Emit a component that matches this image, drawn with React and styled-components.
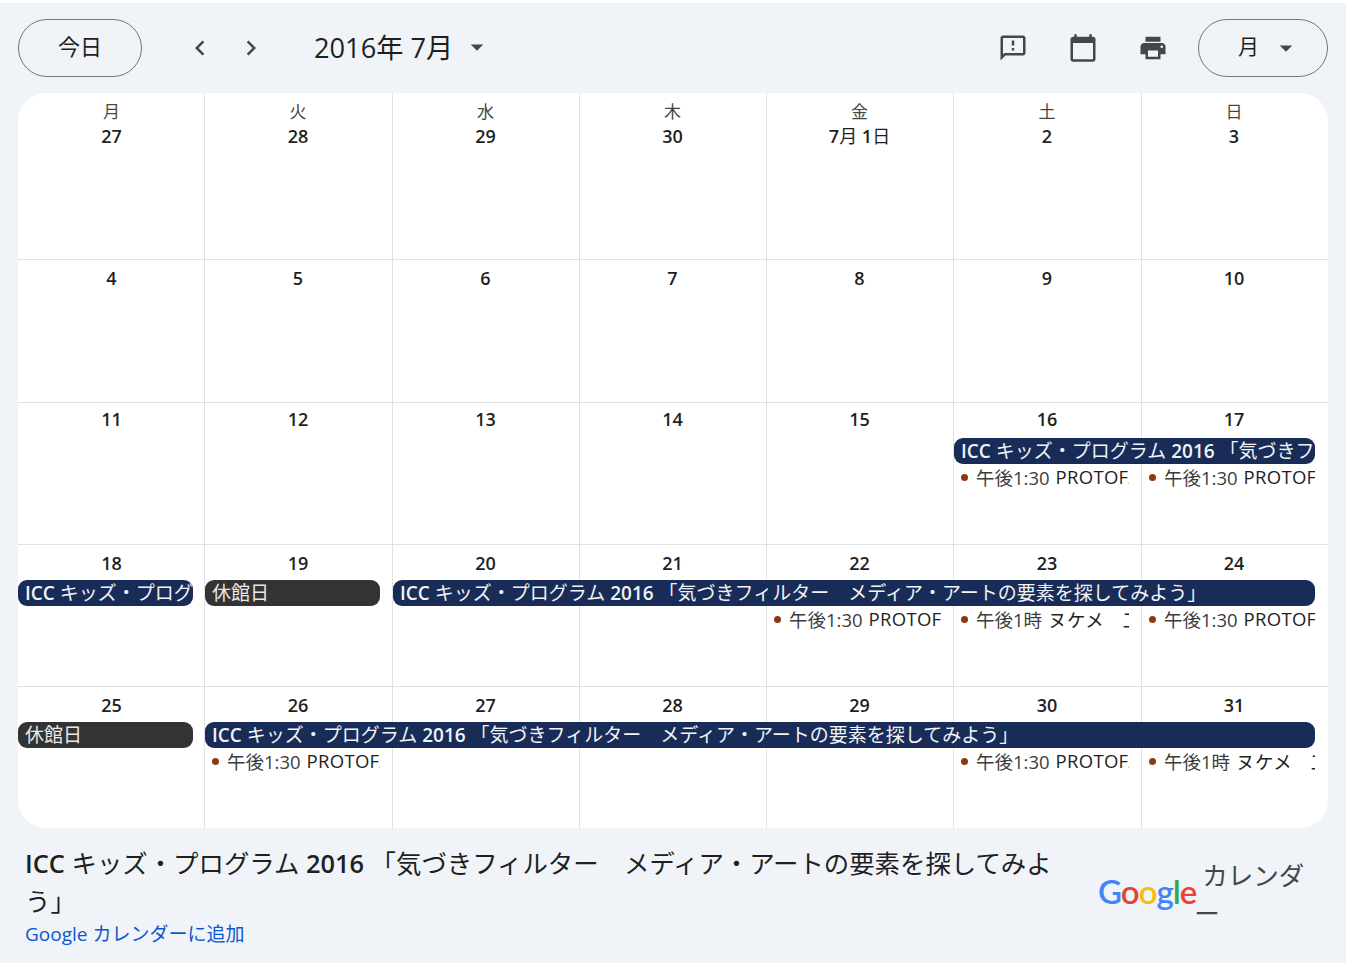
import React from "react";
import styled, { createGlobalStyle } from "styled-components";

const CJK = `"Noto Sans CJK JP"`;
const SANS = `"Open Sans", ${CJK}, sans-serif`;

const ICC_TITLE = "キッズ・プログラム";
const ICC_TAIL = "「気づきフィルター　メディア・アートの要素を探してみよう」";

const weeks = [
  {
    days: ["27", "28", "29", "30", "7月 1日", "2", "3"],
    labels: ["月", "火", "水", "木", "金", "土", "日"],
    headPad: 5,
    bars: [],
    items: [],
  },
  {
    days: ["4", "5", "6", "7", "8", "9", "10"],
    headPad: 6,
    bars: [],
    items: [],
  },
  {
    days: ["11", "12", "13", "14", "15", "16", "17"],
    headPad: 4,
    bars: [{ start: 6, span: 2, icc: true }],
    items: [
      { col: 6, time: "午後1:30", text: "PROTOFAB", latin: true },
      { col: 7, time: "午後1:30", text: "PROTOFAB", latin: true },
    ],
  },
  {
    days: ["18", "19", "20", "21", "22", "23", "24"],
    headPad: 6,
    bars: [
      { start: 1, span: 1, icc: true },
      { start: 2, span: 1, label: "休館日" },
      { start: 3, span: 5, icc: true },
    ],
    items: [
      { col: 5, time: "午後1:30", text: "PROTOFAB", latin: true },
      { col: 6, time: "午後1時", text: "ヌケメ　工作" },
      { col: 7, time: "午後1:30", text: "PROTOFAB", latin: true },
    ],
  },
  {
    days: ["25", "26", "27", "28", "29", "30", "31"],
    headPad: 6,
    bars: [
      { start: 1, span: 1, label: "休館日" },
      { start: 2, span: 6, icc: true },
    ],
    items: [
      { col: 2, time: "午後1:30", text: "PROTOFAB", latin: true },
      { col: 6, time: "午後1:30", text: "PROTOFAB", latin: true },
      { col: 7, time: "午後1時", text: "ヌケメ　工作" },
    ],
  },
];

const GlobalStyle = createGlobalStyle`
  html, body {
    margin: 0;
    background: #ffffff;
  }
  body {
    font-family: ${SANS};
    color: #1f1f1f;
  }
`;

// Material icon paths
const Icon = ({ d, size = 30 }) => (
  <svg width={size} height={size} viewBox="0 0 24 24" fill="#444746">
    <path d={d} />
  </svg>
);

const icons = {
  left: "M15.41 7.41L14 6l-6 6 6 6 1.41-1.41L10.83 12z",
  right: "M8.59 16.59L10 18l6-6-6-6-1.41 1.41L13.17 12z",
  caret: "M7 10l5 5 5-5z",
  feedback:
    "M20 2H4c-1.1 0-1.99.9-1.99 2L2 22l4-4h14c1.1 0 2-.9 2-2V4c0-1.1-.9-2-2-2zm0 14H5.17L4 17.17V4h16v12zM11 12h2v2h-2zm0-6h2v4h-2z",
  calendar:
    "M20 3h-1V1h-2v2H7V1H5v2H4c-1.1 0-2 .9-2 2v16c0 1.1.9 2 2 2h16c1.1 0 2-.9 2-2V5c0-1.1-.9-2-2-2zm0 18H4V8h16v13z",
  print:
    "M19 8H5c-1.66 0-3 1.34-3 3v6h4v4h12v-4h4v-6c0-1.66-1.34-3-3-3zm-3 11H8v-5h8v5zm3-7c-.55 0-1-.45-1-1s.45-1 1-1 1 .45 1 1-.45 1-1 1zm-1-9H6v4h12V3z",
};

const IccTitle = () => (
  <>
    <Medium>ICC</Medium> {ICC_TITLE} <Medium>2016</Medium> {ICC_TAIL}
  </>
);

// Digits are medium, the kanji next to them stay regular
const DayText = ({ day }) => {
  if (day !== "7月 1日") return <Medium>{day}</Medium>;
  return (
    <>
      <Medium>7</Medium>月 <Medium>1</Medium>日
    </>
  );
};

const App = () => {
  return (
    <Page>
      <GlobalStyle />
      <Toolbar>
        <PillButton>今日</PillButton>
        <NavGroup>
          <NavButton>
            <Icon d={icons.left} />
          </NavButton>
          <NavButton>
            <Icon d={icons.right} />
          </NavButton>
        </NavGroup>
        <MonthTitle>2016年 7月</MonthTitle>
        <MonthCaret>
          <Icon d={icons.caret} />
        </MonthCaret>
        <ToolIcons>
          <NavButton wide>
            <Icon d={icons.feedback} />
          </NavButton>
          <NavButton wide>
            <Icon d={icons.calendar} />
          </NavButton>
          <NavButton wide>
            <Icon d={icons.print} />
          </NavButton>
        </ToolIcons>
        <ViewButton>
          <ViewLabel>月</ViewLabel>
          <Icon d={icons.caret} />
        </ViewButton>
      </Toolbar>

      <Calendar>
        {weeks.map((week, w) => (
          <Week key={w} first={w === 0} tall={w === 1}>
            {week.days.map((day, i) => (
              <Cell key={day} col={i + 1} />
            ))}
            {week.days.map((day, i) => (
              <DayHead key={day} col={i + 1} pad={week.headPad}>
                {week.labels && <Weekday>{week.labels[i]}</Weekday>}
                <DayNumber>
                  <DayText day={day} />
                </DayNumber>
              </DayHead>
            ))}
            {week.bars.map((bar) => (
              <Bar key={bar.start} start={bar.start} span={bar.span} grey={!bar.icc}>
                {bar.icc ? <IccTitle /> : bar.label}
              </Bar>
            ))}
            {week.items.map((item) => (
              <Item key={item.col} col={item.col}>
                <Dot />
                {item.time}
                <ItemName latin={item.latin}>{item.text}</ItemName>
              </Item>
            ))}
          </Week>
        ))}
      </Calendar>

      <Footer>
        <FooterText>
          <EventTitle>
            <IccTitle />
          </EventTitle>
          <AddLink href="#">Google カレンダーに追加</AddLink>
        </FooterText>
        <Brand>
          <GoogleLogo>
            <LogoLetter color="#4285f4">G</LogoLetter>
            <LogoLetter color="#ea4335">o</LogoLetter>
            <LogoLetter color="#fbbc05">o</LogoLetter>
            <LogoLetter color="#4285f4">g</LogoLetter>
            <LogoLetter color="#34a853">l</LogoLetter>
            <LogoLetter color="#ea4335">e</LogoLetter>
          </GoogleLogo>
          <BrandName>カレンダー</BrandName>
        </Brand>
      </Footer>
    </Page>
  );
};

const Page = styled.div`
  margin: 3px 0;
  height: 960px;
  background-color: #f0f4f9;
  padding: 0 18px;
  box-sizing: border-box;
`;

const Toolbar = styled.div`
  display: flex;
  align-items: center;
  height: 90px;
`;

const PillButton = styled.button`
  width: 124px;
  height: 58px;
  border: 1px solid #747775;
  border-radius: 29px;
  background: transparent;
  color: #1f1f1f;
  font-family: ${CJK}, sans-serif;
  font-size: 22px;
  padding: 0 0 6px;
`;

const NavGroup = styled.div`
  display: flex;
  margin-left: 32px;
`;

const NavButton = styled.div`
  display: flex;
  align-items: center;
  justify-content: center;
  width: ${(p) => (p.wide ? "70px" : "51px")};
  height: 50px;
`;

const MonthTitle = styled.div`
  margin-left: 38px;
  padding-bottom: 4px;
  font-size: 27.2px;
  color: #1f1f1f;
  white-space: nowrap;
`;

const MonthCaret = styled.div`
  display: flex;
  margin: 0 0 2px 9px;
`;

const ToolIcons = styled.div`
  display: flex;
  margin-left: auto;
  margin-right: 10px;
`;

const ViewButton = styled.div`
  display: flex;
  align-items: center;
  justify-content: space-between;
  box-sizing: border-box;
  width: 130px;
  height: 58px;
  padding: 0 26px 0 39px;
  border: 1px solid #747775;
  border-radius: 29px;
`;

const ViewLabel = styled.span`
  padding-bottom: 6px;
  font-family: ${CJK}, sans-serif;
  font-size: 21px;
`;

const Calendar = styled.div`
  background: #ffffff;
  border-radius: 28px;
  overflow: hidden;
`;

const Week = styled.div`
  display: grid;
  grid-template-columns: 187px 188px 187px 187px 187px 188px 1fr;
  grid-template-rows: ${(p) => (p.first ? "166px" : "35px 27px 25px 1fr")};
  height: ${(p) => (p.first ? "166px" : p.tall ? "143px" : "142px")};
  box-sizing: border-box;
  border-top: ${(p) => (p.first ? "none" : "1px solid #dfe1e5")};
`;

const Cell = styled.div`
  grid-column: ${(p) => p.col};
  grid-row: 1 / -1;
  border-right: ${(p) => (p.col === 7 ? "none" : "1px solid #dfe1e5")};
`;

const DayHead = styled.div`
  grid-column: ${(p) => p.col};
  grid-row: 1;
  display: flex;
  flex-direction: column;
  align-items: center;
  padding: ${(p) => p.pad}px ${(p) => (p.col === 1 ? 0 : 2)}px 0 0;
`;

const Weekday = styled.div`
  font-family: ${CJK}, sans-serif;
  font-size: 17px;
  line-height: 26px;
  color: #444746;
`;

const DayNumber = styled.div`
  font-size: 18px;
  line-height: 24px;
  color: #1f1f1f;
`;

const Medium = styled.span`
  font-weight: 600;
`;

const Bar = styled.div`
  grid-column: ${(p) => p.start} / span ${(p) => p.span};
  grid-row: 2;
  height: 26px;
  margin-right: ${(p) => (p.start === 1 ? 12 : 13)}px;
  padding-left: 7px;
  border-radius: 9px;
  background-color: ${(p) => (p.grey ? "#333333" : "#182c57")};
  color: ${(p) => (p.grey ? "#e8e8e8" : "#f0f3f8")};
  font-size: 19px;
  line-height: 27px;
  white-space: nowrap;
  overflow: hidden;
`;

const Item = styled.div`
  grid-column: ${(p) => p.col};
  grid-row: 3;
  display: flex;
  align-items: center;
  height: 23px;
  margin-right: 13px;
  padding-left: 7px;
  font-size: 18.5px;
  color: #3c3c3c;
  white-space: pre;
  overflow: hidden;
`;

const ItemName = styled.span`
  margin-left: 6px;
  color: #1f1f1f;
  font-weight: ${(p) => (p.latin ? 500 : 400)};
  letter-spacing: 0.3px;
`;

const Dot = styled.span`
  flex: none;
  width: 7px;
  height: 7px;
  margin: 2px 8px 0 0;
  border-radius: 50%;
  background-color: #8a3a12;
`;

const Footer = styled.div`
  display: flex;
  justify-content: space-between;
  padding: 16px 0 0 7px;
`;

const FooterText = styled.div`
  width: 1040px;
`;

const EventTitle = styled.div`
  font-size: 25.4px;
  line-height: 38px;
  color: #1f1f1f;
`;

const AddLink = styled.a`
  display: block;
  margin-top: 1px;
  font-size: 19px;
  line-height: 26px;
  color: #0b57d0;
  text-decoration: none;
`;

const Brand = styled.div`
  display: flex;
  align-items: center;
  width: 230px;
  padding: 0 16px 10px 0;
  box-sizing: border-box;
`;

const GoogleLogo = styled.div`
  font-family: "Lato", sans-serif;
  font-size: 33px;
  letter-spacing: -1px;
  font-weight: 600;
`;

const LogoLetter = styled.span`
  color: ${(p) => p.color};
`;

const BrandName = styled.div`
  width: 114px;
  margin-left: -2px;
  padding-top: 4px;
  font-family: ${CJK}, sans-serif;
  font-size: 25.5px;
  line-height: 38px;
  text-indent: 8px;
  color: #444746;
  word-break: break-all;
`;

export default App;
